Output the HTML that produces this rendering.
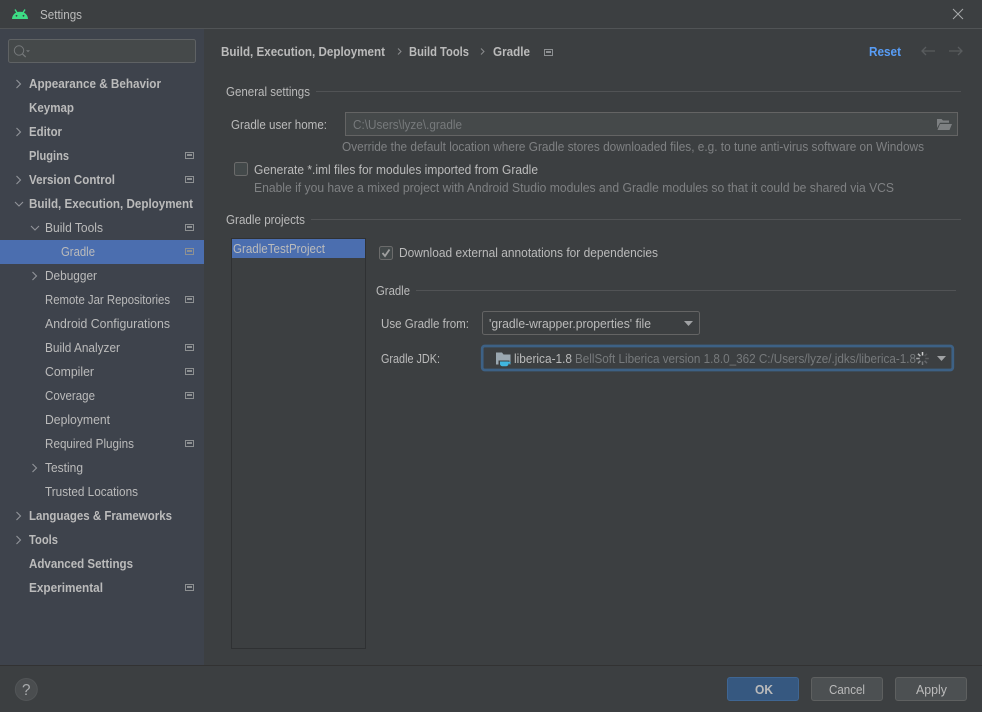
<!DOCTYPE html>
<html><head><meta charset="utf-8"><title>Settings</title>
<style>
html,body{margin:0;padding:0;background:#3c3f41;width:982px;height:712px;overflow:hidden}
svg{display:block}
text{font-family:"Liberation Sans",sans-serif;font-size:12.5px;fill:#bbbbbb;white-space:pre}
.b{font-weight:bold}
.d{fill:#7f8183}
.h{fill:#777a7c}
</style></head><body>
<svg width="982" height="712" viewBox="0 0 982 712" xmlns="http://www.w3.org/2000/svg">
<defs>
<g id="pj"><path d="M0 1h9v7h-9zM1 2v5h7v-5z" fill="#8d9092" fill-rule="evenodd"/><rect x="2" y="3" width="5" height="2" fill="#8d9092"/></g>
</defs>
<rect width="982" height="712" fill="#3c3f41"/>
<!-- title bar -->
<path d="M12 19c.2-4.200 3.400-7.200 8-7.200s7.800 3 8 7.200z" fill="#3ddc84"/>
<path d="M15 9.500l2.400 3.800M25 9.500l-2.400 3.800" stroke="#3ddc84" stroke-width="1.400"/>
<circle cx="16.500" cy="15.800" r="0.900" fill="#3c3f41"/><circle cx="23.500" cy="15.800" r="0.900" fill="#3c3f41"/>
<text x="40" y="19" textLength="42" lengthAdjust="spacingAndGlyphs">Settings</text>
<path d="M953 9l10 10M963 9L953 19" stroke="#a8aaac" stroke-width="1" fill="none"/>
<rect y="28" width="982" height="1" fill="#515456"/>
<!-- sidebar -->
<rect y="29" width="204" height="636" fill="#3e434c"/>
<rect x="8.500" y="39.500" width="187" height="23" rx="2" fill="#45494a" stroke="#5f6264"/>
<circle cx="19" cy="50.500" r="4.700" fill="none" stroke="#75787a" stroke-width="1"/>
<path d="M22.500 54l3.200 3" stroke="#75787a" stroke-width="1.200"/>
<path d="M26 50.300h4l-2 2z" fill="#75787a"/>
<rect y="240" width="204" height="24" fill="#4b6eaf"/>
<g fill="none" stroke="#92959a" stroke-width="1.100">
<path d="M16.500 80l4 4-4 4"/>
<path d="M16.500 128l4 4-4 4"/>
<path d="M16.500 176l4 4-4 4"/>
<path d="M15 202l4 4 4-4"/>
<path d="M31 226l4 4 4-4"/>
<path d="M32.500 272l4 4-4 4"/>
<path d="M32.500 464l4 4-4 4"/>
<path d="M16.500 512l4 4-4 4"/>
<path d="M16.500 536l4 4-4 4"/>
</g>
<text class="b" x="29" y="88" textLength="132" lengthAdjust="spacingAndGlyphs">Appearance &amp; Behavior</text>
<text class="b" x="29" y="112" textLength="45" lengthAdjust="spacingAndGlyphs">Keymap</text>
<text class="b" x="29" y="136" textLength="33" lengthAdjust="spacingAndGlyphs">Editor</text>
<text class="b" x="29" y="160" textLength="40" lengthAdjust="spacingAndGlyphs">Plugins</text>
<text class="b" x="29" y="184" textLength="86" lengthAdjust="spacingAndGlyphs">Version Control</text>
<text class="b" x="29" y="208" textLength="164" lengthAdjust="spacingAndGlyphs">Build, Execution, Deployment</text>
<text x="45" y="232" textLength="58" lengthAdjust="spacingAndGlyphs">Build Tools</text>
<text x="61" y="256" textLength="34" lengthAdjust="spacingAndGlyphs">Gradle</text>
<text x="45" y="280" textLength="52" lengthAdjust="spacingAndGlyphs">Debugger</text>
<text x="45" y="304" textLength="125" lengthAdjust="spacingAndGlyphs">Remote Jar Repositories</text>
<text x="45" y="328" textLength="125" lengthAdjust="spacingAndGlyphs">Android Configurations</text>
<text x="45" y="352" textLength="75" lengthAdjust="spacingAndGlyphs">Build Analyzer</text>
<text x="45" y="376" textLength="49" lengthAdjust="spacingAndGlyphs">Compiler</text>
<text x="45" y="400" textLength="50" lengthAdjust="spacingAndGlyphs">Coverage</text>
<text x="45" y="424" textLength="65" lengthAdjust="spacingAndGlyphs">Deployment</text>
<text x="45" y="448" textLength="89" lengthAdjust="spacingAndGlyphs">Required Plugins</text>
<text x="45" y="472" textLength="38" lengthAdjust="spacingAndGlyphs">Testing</text>
<text x="45" y="496" textLength="93" lengthAdjust="spacingAndGlyphs">Trusted Locations</text>
<text class="b" x="29" y="520" textLength="143" lengthAdjust="spacingAndGlyphs">Languages &amp; Frameworks</text>
<text class="b" x="29" y="544" textLength="29" lengthAdjust="spacingAndGlyphs">Tools</text>
<text class="b" x="29" y="568" textLength="104" lengthAdjust="spacingAndGlyphs">Advanced Settings</text>
<text class="b" x="29" y="592" textLength="74" lengthAdjust="spacingAndGlyphs">Experimental</text>
<use href="#pj" x="185" y="151"/><use href="#pj" x="185" y="175"/><use href="#pj" x="185" y="223"/><use href="#pj" x="185" y="247"/><use href="#pj" x="185" y="295"/><use href="#pj" x="185" y="343"/><use href="#pj" x="185" y="367"/><use href="#pj" x="185" y="391"/><use href="#pj" x="185" y="439"/><use href="#pj" x="185" y="583"/>
<!-- header -->
<text class="b" x="221" y="56" textLength="164" lengthAdjust="spacingAndGlyphs">Build, Execution, Deployment</text>
<path d="M398 48.500l3 3-3 3" fill="none" stroke="#8b8d8f"/>
<text class="b" x="409" y="56" textLength="60" lengthAdjust="spacingAndGlyphs">Build Tools</text>
<path d="M481 48.500l3 3-3 3" fill="none" stroke="#8b8d8f"/>
<text class="b" x="493" y="56" textLength="37" lengthAdjust="spacingAndGlyphs">Gradle</text>
<use href="#pj" x="544" y="48"/>
<text class="b" x="869" y="56" textLength="32" lengthAdjust="spacingAndGlyphs" style="fill:#589df6">Reset</text>
<g fill="none" stroke="#595c5e" stroke-width="1.300"><path d="M922 51h13M926 47l-4 4 4 4"/><path d="M949 51h13M958 47l4 4-4 4"/></g>
<!-- general settings -->
<text x="226" y="96" textLength="84" lengthAdjust="spacingAndGlyphs">General settings</text>
<rect x="316" y="91" width="645" height="1" fill="#515355"/>
<text x="231" y="129" textLength="96" lengthAdjust="spacingAndGlyphs">Gradle user home:</text>
<rect x="345.500" y="112.500" width="612" height="23" fill="#45494a" stroke="#646464"/>
<text class="h" x="353" y="129" textLength="109" lengthAdjust="spacingAndGlyphs">C:\Users\lyze\.gradle</text>
<path d="M937 128v-9h4.500l1.500 1.500h6v2.300h-9z" fill="#7d8082"/><path d="M937.500 130l2.500-6h12l-2.500 6z" fill="#7d8082"/>
<text class="d" x="342" y="151" textLength="582" lengthAdjust="spacingAndGlyphs">Override the default location where Gradle stores downloaded files, e.g. to tune anti-virus software on Windows</text>
<rect x="234.500" y="162.500" width="13" height="13" rx="2" fill="#43494a" stroke="#6b6b6b"/>
<text x="254" y="174" textLength="284" lengthAdjust="spacingAndGlyphs">Generate *.iml files for modules imported from Gradle</text>
<text class="d" x="254" y="192" textLength="640" lengthAdjust="spacingAndGlyphs">Enable if you have a mixed project with Android Studio modules and Gradle modules so that it could be shared via VCS</text>
<!-- gradle projects -->
<text x="226" y="224" textLength="79" lengthAdjust="spacingAndGlyphs">Gradle projects</text>
<rect x="311" y="219" width="650" height="1" fill="#515355"/>
<rect x="231.500" y="238.500" width="134" height="410" fill="#3c3f41" stroke="#2f3133"/>
<rect x="232" y="239" width="133" height="19" fill="#4b6eaf"/>
<text x="233" y="253" textLength="92" lengthAdjust="spacingAndGlyphs">GradleTestProject</text>
<rect x="379.500" y="246.500" width="13" height="13" rx="2" fill="#43494a" stroke="#6b6b6b"/>
<path d="M382.500 253l2.500 3 4.500-6.500" fill="none" stroke="#a0a0a0" stroke-width="1.800"/>
<text x="399" y="257" textLength="259" lengthAdjust="spacingAndGlyphs">Download external annotations for dependencies</text>
<text x="376" y="295" textLength="34" lengthAdjust="spacingAndGlyphs">Gradle</text>
<rect x="416" y="290" width="540" height="1" fill="#515355"/>
<text x="381" y="328" textLength="88" lengthAdjust="spacingAndGlyphs">Use Gradle from:</text>
<rect x="482.500" y="311.500" width="217" height="23" rx="2" fill="#3c3f41" stroke="#646464"/>
<text x="489" y="328" textLength="162" lengthAdjust="spacingAndGlyphs">'gradle-wrapper.properties' file</text>
<path d="M684 321h9l-4.500 5z" fill="#a0a2a4"/>
<text x="381" y="363" textLength="59" lengthAdjust="spacingAndGlyphs">Gradle JDK:</text>
<rect x="482.200" y="346" width="470.600" height="24" rx="2.500" fill="#3c3f41" stroke="#3d6185" stroke-width="2.700"/>
<path d="M496 352.500h6l1.500 2h7v10h-14.500z" fill="#9aa7b0"/>
<path d="M498.500 360.500h11v6.500h-11z" fill="#3c3f41"/>
<path d="M500 361.500h8.500v2.500a2.200 2.200 0 0 1-2.200 2.200h-4.100a2.200 2.200 0 0 1-2.200-2.200z" fill="#40b6e0"/><rect x="508.500" y="361.800" width="2" height="1.800" fill="#40b6e0"/>
<text x="514" y="363" textLength="58" lengthAdjust="spacingAndGlyphs">liberica-1.8</text>
<text class="h" x="575" y="363" textLength="341" lengthAdjust="spacingAndGlyphs">BellSoft Liberica version 1.8.0_362 C:/Users/lyze/.jdks/liberica-1.8</text>
<g stroke-width="1.500" fill="none">
<path d="M922.500 352v3.500" stroke="#cfd0d1"/><path d="M918 353.800l2.400 2.400" stroke="#b9babb"/><path d="M916.200 358.500h3.500" stroke="#a3a5a6"/><path d="M918 363.200l2.400-2.400" stroke="#8c8e90"/><path d="M922.500 365v-3.500" stroke="#77797b"/><path d="M927 363.200l-2.400-2.400" stroke="#65676a"/><path d="M928.800 358.500h-3.500" stroke="#5c5e60"/><path d="M927 353.800l-2.400 2.400" stroke="#555759"/>
</g>
<path d="M937 356h9l-4.500 5z" fill="#a0a2a4"/>
<!-- footer -->
<rect y="665" width="982" height="1" fill="#323232"/>
<circle cx="26.300" cy="689.500" r="11" fill="#4a4d4f" stroke="#525557"/>
<text x="22" y="695" textLength="8.500" lengthAdjust="spacingAndGlyphs" style="font-size:15.500px;fill:#a9abad">?</text>
<rect x="727.500" y="677.500" width="71" height="23" rx="2.500" fill="#365880" stroke="#3f6693"/>
<text class="b" x="755" y="694" textLength="18" lengthAdjust="spacingAndGlyphs">OK</text>
<rect x="811.500" y="677.500" width="71" height="23" rx="2.500" fill="#4c5052" stroke="#5e6060"/>
<text x="829" y="694" textLength="36" lengthAdjust="spacingAndGlyphs">Cancel</text>
<rect x="895.500" y="677.500" width="71" height="23" rx="2.500" fill="#4c5052" stroke="#5e6060"/>
<text x="916" y="694" textLength="31" lengthAdjust="spacingAndGlyphs">Apply</text>
</svg>
</body></html>
